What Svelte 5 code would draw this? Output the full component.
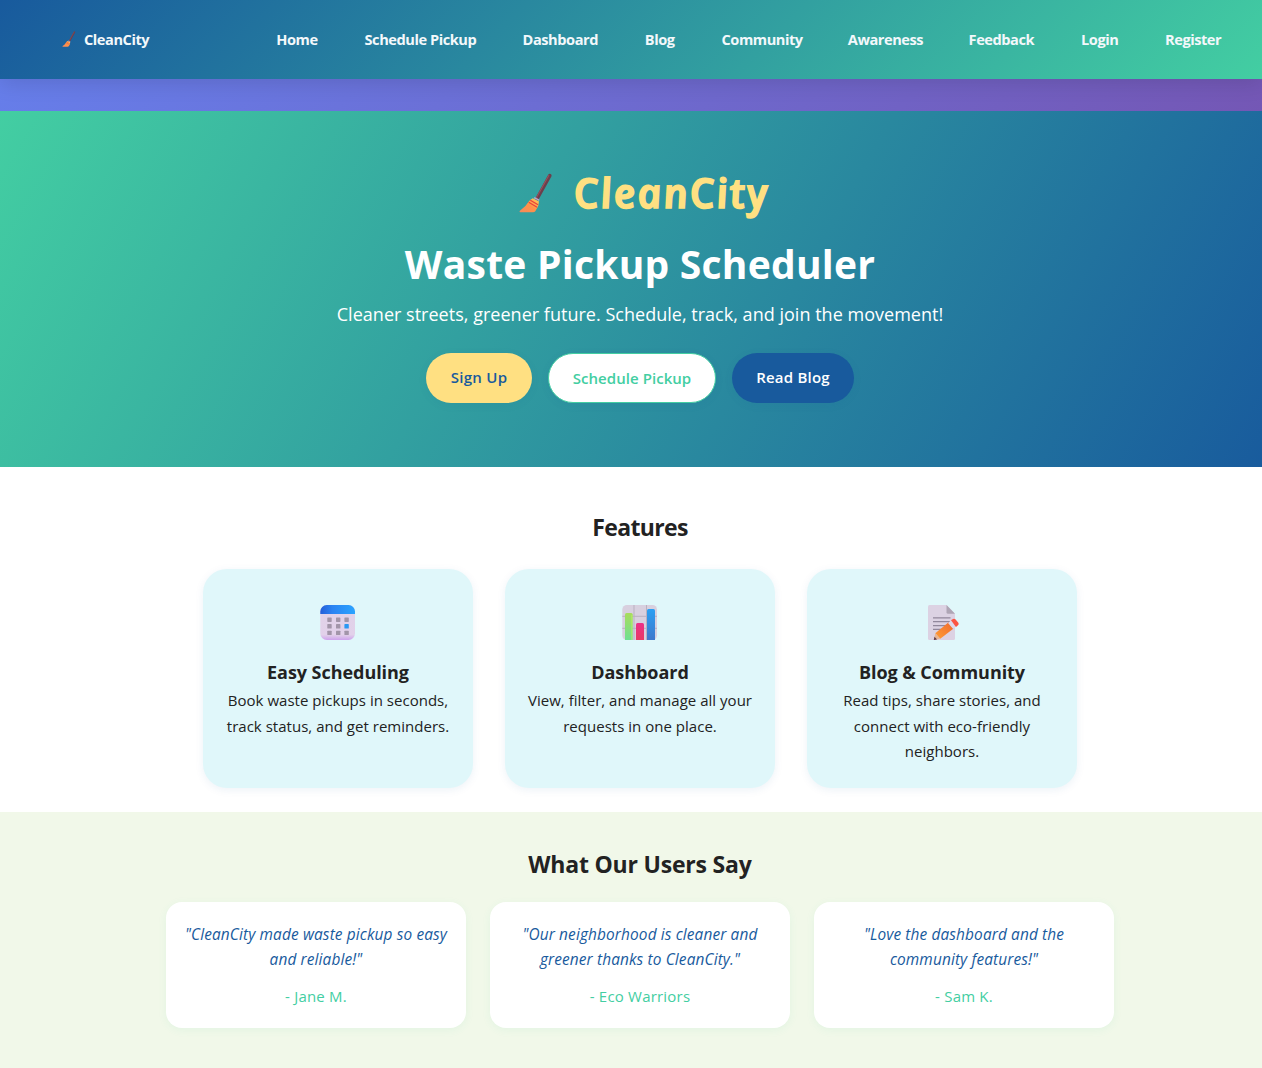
<script>
  const links = ['Home', 'Schedule Pickup', 'Dashboard', 'Blog', 'Community', 'Awareness', 'Feedback', 'Login', 'Register'];
  const features = [
    { icon: 'calendar', title: 'Easy Scheduling', lines: ['Book waste pickups in seconds,', 'track status, and get reminders.'] },
    { icon: 'chart', title: 'Dashboard', lines: ['View, filter, and manage all your', 'requests in one place.'] },
    { icon: 'memo', title: 'Blog & Community', lines: ['Read tips, share stories, and', 'connect with eco-friendly', 'neighbors.'] }
  ];
  const quotes = [
    { lines: ['"CleanCity made waste pickup so easy', 'and reliable!"'], author: '- Jane M.' },
    { lines: ['"Our neighborhood is cleaner and', 'greener thanks to CleanCity."'], author: '- Eco Warriors' },
    { lines: ['"Love the dashboard and the', 'community features!"'], author: '- Sam K.' }
  ];
</script>

{#snippet broom(cls)}
  <svg class={cls} viewBox="0 0 34 40" aria-hidden="true">
    <defs>
      <linearGradient id="{cls}-straw" x1="0" y1="1" x2="1" y2="0">
        <stop offset="0" stop-color="#f58a5c" />
        <stop offset=".5" stop-color="#ff9248" />
        <stop offset="1" stop-color="#ffd05a" />
      </linearGradient>
    </defs>
    <path d="M18.2 25.5 30.8 2.6" stroke="#6b3f4c" stroke-width="3.6" stroke-linecap="round" />
    <path d="M17.4 24.7 29.8 2.4" stroke="#99505a" stroke-width="1.1" stroke-linecap="round" />
    <path d="M13.7 25.3 20 28.4 19.2 33 16.3 38.3Q15.5 39.2 14 39.2H1.4Q-.2 39 1.2 37.6Q7 33.5 9.2 29.3Q10.8 26.6 13.7 25.3Z" fill="url(#{cls}-straw)" />
    <path d="m14.6 25.2 1.1-1.3 4.7 2.5-.3 1.7Z" fill="#b9a5c9" />
    <path d="m11.3 27.2 7.8 4.6M9.7 29.3l8.4 5" stroke="#e8413c" stroke-width="1.2" fill="none" />
  </svg>
{/snippet}

<div class="page">
  <header>
    <a class="brand" href="#home">{@render broom('broom-small')}<span>CleanCity</span></a>
    <nav>
      {#each links as link}<a href="#{link}">{link}</a>{/each}
    </nav>
  </header>
  <div class="strip"></div>

  <section class="hero">
    <div class="logo">{@render broom('broom-large')}<span>CleanCity</span></div>
    <h1>Waste Pickup Scheduler</h1>
    <p>Cleaner streets, greener future. Schedule, track, and join the movement!</p>
    <div class="actions">
      <a class="btn signup" href="#signup">Sign Up</a>
      <a class="btn schedule" href="#schedule">Schedule Pickup</a>
      <a class="btn blog" href="#blog">Read Blog</a>
    </div>
  </section>

  <section class="features">
    <h2 class="tight">Features</h2>
    <div class="feature-row">
      {#each features as f}
        <article class="feature">
          <svg class="icon" viewBox="0 0 36 36" aria-hidden="true">
            {#if f.icon === 'calendar'}
              <defs>
                <linearGradient id="cal-top"><stop stop-color="#245fd8" /><stop offset=".35" stop-color="#2b83f2" /><stop offset="1" stop-color="#2ba4ff" /></linearGradient>
                <linearGradient id="cal-body" x2="0" y2="1"><stop stop-color="#e0d3e8" /><stop offset=".85" stop-color="#e2d1ea" /><stop offset="1" stop-color="#cda2ec" /></linearGradient>
              </defs>
              <rect x=".3" y="0" width="34.7" height="35" rx="6.5" fill="url(#cal-body)" />
              <path d="M.3 9V6.5A6.5 6.5 0 0 1 6.8 0h21.7A6.5 6.5 0 0 1 35 6.5V9Z" fill="url(#cal-top)" />
              {#each [12.5, 19.1, 25.7] as y, r}
                {#each [7.3, 16, 24.4] as x, c}
                  <rect {x} {y} width="4.4" height="4.4" rx=".6" fill={r === 1 && c === 2 ? '#2b98f3' : '#a295a9'} />
                {/each}
              {/each}
            {:else if f.icon === 'chart'}
              <defs>
                <linearGradient id="bar-g" x2="0" y2="1"><stop stop-color="#a8dc5c" /><stop offset="1" stop-color="#6fe093" /></linearGradient>
                <linearGradient id="bar-r" x2="0" y2="1"><stop stop-color="#ed2f88" /><stop offset="1" stop-color="#e63b64" /></linearGradient>
                <linearGradient id="bar-b" x2="0" y2="1"><stop stop-color="#2ba0f3" /><stop offset="1" stop-color="#3f78cc" /></linearGradient>
              </defs>
              <rect x=".3" y="0" width="34.7" height="35" rx="4.5" fill="#d8d0df" />
              <path d="M12 0v35M24.5 0v35M.3 11.3H35M.3 23.3H35" stroke="#b9b1c0" />
              <path d="M3 35V9.5Q3 8 4.5 8h4.7q1.5 0 1.5 1.5V35Z" fill="url(#bar-g)" />
              <path d="M14 35V19.5q0-1.5 1.5-1.5h5q1.5 0 1.5 1.5V35Z" fill="url(#bar-r)" />
              <path d="M25 35V5.5Q25 4 26.5 4h5q1.5 0 1.5 1.5V35Z" fill="url(#bar-b)" />
              <path d="M9.8 10v25" stroke="#bdf05f" stroke-opacity=".7" />
            {:else}
              <defs>
                <linearGradient id="pencil" x1="0" y1="1" x2="1" y2="0"><stop stop-color="#ff9d35" /><stop offset="1" stop-color="#ef692f" /></linearGradient>
              </defs>
              <path d="M5.5 0h17L31 8.8v24.7q0 1.5-1.5 1.5h-24Q4 35 4 33.5v-32Q4 0 5.5 0Z" fill="#dcd2e3" />
              <path d="M22.5 0v7.3q0 1.5 1.5 1.5h7Z" fill="#aea5b5" />
              <path d="M9 12.8h17.5M9 16.6h17.5M9 20.6h13M9 24.4h9" stroke="#91879c" stroke-width="1.3" />
              <path d="m11.3 28.3 13.6-11.2 4.7 6.3L16.2 33.7Z" fill="url(#pencil)" />
              <path d="m11.3 28.3 4.9 5.4-6.4 1.4Z" fill="#e8b493" />
              <path d="m10.5 31.7 2.5 2.7-3.2.6Z" fill="#5b3949" />
              <path d="m24 18 3.2-2.8 5 6.2-3 2.5Z" fill="#ddd8ea" />
              <path d="m27 15.3 2-1.3q1.3-.8 2.4.3l2.9 3.4q1 1.3-.1 2.4l-2.2 1.8Z" fill="#fb5443" />
            {/if}
          </svg>
          <h3>{f.title}</h3>
          <p>{#each f.lines as line}<span>{line}</span>{/each}</p>
        </article>
      {/each}
    </div>
  </section>

  <section class="users">
    <h2>What Our Users Say</h2>
    <div class="quote-row">
      {#each quotes as q}
        <blockquote>
          <p>{#each q.lines as line}<span>{line}</span>{/each}</p>
          <cite>{q.author}</cite>
        </blockquote>
      {/each}
    </div>
  </section>
</div>

<style>
  :global(body) { margin: 0; overflow: hidden; }
  .page { width: 1280px; height: 1068px; color: #222; font-family: 'Open Sans', 'Noto Sans', sans-serif; font-size: 15px; }
  .page * { box-sizing: border-box; }
  a { text-decoration: none; white-space: nowrap; }
  h1, h2, h3, p, blockquote { margin: 0; white-space: nowrap; }
  p span { display: block; }

  header { position: relative; width: 1262px; height: 79px; display: flex; align-items: center; padding: 0 0 2px 62px; background: linear-gradient(135deg, #185a9d, #43cea2); box-shadow: 0 4px 20px rgba(0, 0, 0, .12); font-size: 14.6px; line-height: 20px; font-weight: 700; letter-spacing: -.45px; }
  header a { color: #f3f8fb; }
  .brand { display: flex; align-items: center; width: 214px; }
  .brand span { margin-left: 8px; }
  :global(.broom-small) { width: 14px; height: 16px; margin-top: 1px; fill: none; }
  nav { display: grid; grid-template-columns: 42px 113px 75px 32px 81px 74px 66px 39px 56px; column-gap: 45.9px; }
  nav a { display: flex; justify-content: center; }
  .strip { height: 32px; width: 1262px; background: linear-gradient(135deg, #667eea, #7457b5); }

  .hero { height: 356px; display: flex; flex-direction: column; align-items: center; background: linear-gradient(120deg, #43cea2, #185a9d); color: #fff; position: relative; }
  .logo { display: flex; height: 66px; margin-top: 48px; padding-left: 4px; align-items: center; color: #ffe082; }
  .logo span { margin-left: 20px; font: italic 600 41px/66px 'Open Sans', sans-serif; letter-spacing: 2.1px; transform: skewX(9deg); -webkit-text-stroke: 1.7px #ffe082; }
  :global(.broom-large) { width: 34px; height: 40px; fill: none; margin: 1px 0 0 3px; }
  h1 { margin-top: 8px; font-size: 39px; line-height: 62px; font-weight: 700; letter-spacing: .25px; }
  .hero p { margin-top: 4px; font-size: 18px; line-height: 31px; letter-spacing: .02px; }
  .actions { display: flex; gap: 16px; margin-top: 23px; }
  .btn { height: 50px; display: flex; align-items: center; justify-content: center; border-radius: 25px; padding-bottom: 2px; font-size: 15px; font-weight: 600; letter-spacing: .05px; box-shadow: 0 2px 8px rgba(24, 90, 157, .08); }
  .signup { width: 106px; color: #185a9d; background: #ffe082; letter-spacing: .3px; }
  .schedule { width: 168px; color: #43cea2; background: #fff; border: 1.5px solid #43cea2; padding-bottom: 0; }
  .blog { width: 122px; color: #fff; background: #185a9d; letter-spacing: .2px; }

  .features { height: 345px; background: #fff; padding-top: 41px; text-align: center; }
  h2 { font-size: 23px; line-height: 38px; font-weight: 700; letter-spacing: -.2px; }
  .tight { letter-spacing: -.65px; }
  .feature-row { display: flex; justify-content: center; gap: 32px; margin-top: 23.3px; }
  .feature { width: 270px; height: 218.4px; padding-top: 35.7px; border-radius: 24px; background: #e0f7fa; display: flex; flex-direction: column; align-items: center; box-shadow: 0 2px 8px rgba(24, 90, 157, .08); }
  .icon { width: 36px; height: 36px; fill: none; }
  h3 { margin-top: 17px; font-size: 18px; line-height: 29px; font-weight: 700; letter-spacing: -.05px; }
  .feature p { margin-top: 1px; line-height: 25.6px; letter-spacing: .02px; }

  .users { height: 256px; background: #f1f8e9; padding-top: 33px; text-align: center; }
  .quote-row { display: flex; justify-content: center; gap: 24px; margin-top: 19px; }
  blockquote { width: 300px; height: 126px; padding-top: 20px; border-radius: 16px; background: #fff; box-shadow: 0 2px 8px rgba(67, 206, 162, .08); }
  blockquote p { color: #185a9d; font-style: italic; font-size: 15.4px; line-height: 25px; letter-spacing: .13px; }
  cite { display: block; margin-top: 11px; color: #43cea2; font-style: normal; line-height: 26px; letter-spacing: .2px; }
</style>
